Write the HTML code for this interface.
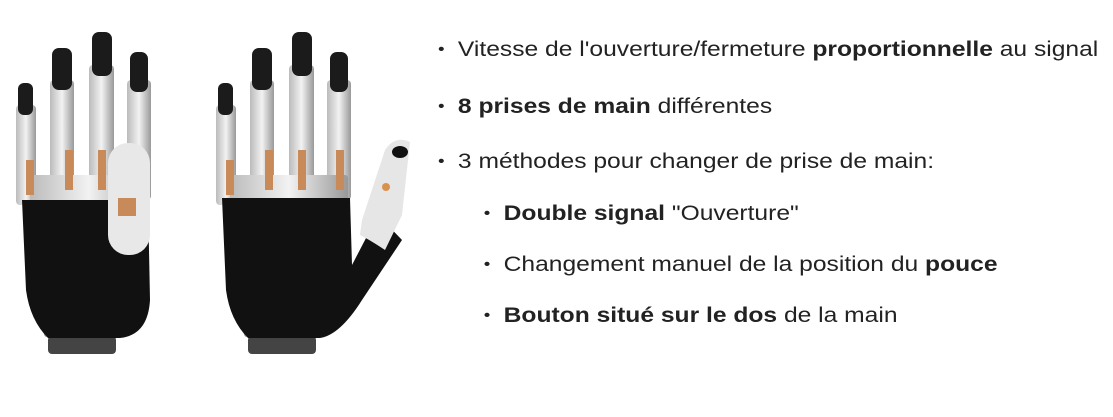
<!DOCTYPE html>
<html><head><style>
body{margin:0;width:1113px;height:417px;background:#fff;font-family:"Liberation Sans",Arial,sans-serif;color:#222;position:relative;overflow:hidden}
#t{position:absolute;left:438px;top:0;transform:scaleX(1.172);transform-origin:0 0}
.l{position:absolute;font-size:21px;white-space:nowrap;line-height:24px}
.l:before{content:"•";position:absolute;left:-17px;font-size:16px}
svg{position:absolute;left:0;top:0}
</style></head><body>
<svg width="420" height="417" viewBox="0 0 420 417">
<defs>
<linearGradient id="m" x1="0" x2="1"><stop offset="0" stop-color="#bbb"/><stop offset=".5" stop-color="#f2f2f2"/><stop offset="1" stop-color="#999"/></linearGradient>
</defs>
<g id="h">
<rect x="16" y="105" width="20" height="100" rx="4" fill="url(#m)"/>
<rect x="50" y="80" width="24" height="120" rx="4" fill="url(#m)"/>
<rect x="89" y="65" width="25" height="135" rx="4" fill="url(#m)"/>
<rect x="127" y="80" width="24" height="120" rx="4" fill="url(#m)"/>
<rect x="30" y="175" width="118" height="30" rx="3" fill="url(#m)"/>
<rect x="26" y="160" width="8" height="35" fill="#c98a5a"/>
<rect x="65" y="150" width="8" height="40" fill="#c98a5a"/>
<rect x="98" y="150" width="8" height="40" fill="#c98a5a"/>
<rect x="136" y="150" width="8" height="40" fill="#c98a5a"/>
<rect x="18" y="83" width="15" height="32" rx="6" fill="#1b1b1b"/>
<rect x="52" y="48" width="20" height="42" rx="7" fill="#1b1b1b"/>
<rect x="92" y="32" width="20" height="44" rx="7" fill="#1b1b1b"/>
<rect x="130" y="52" width="18" height="40" rx="7" fill="#1b1b1b"/>
<rect x="44" y="325" width="76" height="12" rx="3" fill="#999"/>
<rect x="48" y="336" width="68" height="18" rx="4" fill="#444"/>
</g>
<use href="#h" x="200"/>
<path d="M22 200 L148 200 L150 300 Q148 335 120 338 L48 338 Q30 320 26 290 Z" fill="#111"/>
<rect x="108" y="143" width="42" height="112" rx="20" fill="#e8e8e8"/>
<rect x="118" y="198" width="18" height="18" fill="#c98a5a"/>
<path d="M222 198 L350 198 L352 265 L378 215 L402 240 L362 300 Q340 335 320 338 L248 338 Q230 320 226 290 Z" fill="#111"/>
<path d="M362 220 L385 150 Q395 135 410 142 L402 215 L385 250 Q370 240 360 235 Z" fill="#e6e6e6"/>
<ellipse cx="400" cy="152" rx="8" ry="6" fill="#111"/>
<circle cx="386" cy="187" r="4" fill="#d9914f"/>
</svg>
<div id="t">
<div class="l" style="left:17px;top:38px">Vitesse de l'ouverture/fermeture <b>proportionnelle</b> au signal</div>
<div class="l" style="left:17px;top:95px"><b>8 prises de main</b> différentes</div>
<div class="l" style="left:17px;top:150px">3 méthodes pour changer de prise de main:</div>
<div class="l" style="left:56px;top:202px"><b>Double signal</b> "Ouverture"</div>
<div class="l" style="left:56px;top:253px">Changement manuel de la position du <b>pouce</b></div>
<div class="l" style="left:56px;top:304px"><b>Bouton situé sur le dos</b> de la main</div>
</div>
</body></html>
